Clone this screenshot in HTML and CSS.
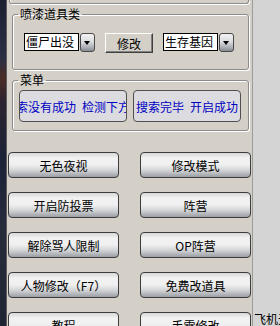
FILE: index.html
```html
<!DOCTYPE html>
<html lang="zh-CN">
<head>
    <meta charset="UTF-8">
    <meta name="viewport" content="width=device-width, initial-scale=1.0">
    <title>工具面板</title>
    <link rel="stylesheet" href="styles.css">
</head>
<body>
    <div class="window">
        <div class="edge"></div>
        <div class="panel">
            <div class="cut"></div>

            <fieldset class="group">
                <legend>喷漆道具类</legend>
                <div class="paint-row">
                    <div class="combo">
                        <div class="combo-field">僵尸出没</div>
                        <span class="combo-arrow"></span>
                    </div>
                    <button class="classic">修改</button>
                    <div class="combo">
                        <div class="combo-field">生存基因</div>
                        <span class="combo-arrow"></span>
                    </div>
                </div>
            </fieldset>

            <fieldset class="group">
                <legend>菜单</legend>
                <div class="menu-row">
                    <div class="status status-left">搜索没有成功&ensp;检测下方</div>
                    <div class="status">搜索完毕&ensp;开启成功</div>
                </div>
            </fieldset>

            <div class="actions">
                <button class="skin">无色夜视</button>
                <button class="skin">修改模式</button>
                <button class="skin">开启防投票</button>
                <button class="skin">阵营</button>
                <button class="skin">解除骂人限制</button>
                <button class="skin">OP阵营</button>
                <button class="skin">人物修改（F7）</button>
                <button class="skin">免费改道具</button>
                <button class="skin">教程</button>
                <button class="skin">手雷修改</button>
            </div>
        </div>
        <div class="side">飞机无敌</div>
    </div>
</body>
</html>
```

FILE: styles.css
```css
body {
    margin: 0;
    font-family: "Noto Sans CJK SC", "Liberation Sans", sans-serif;
    font-size: 12px;
}
.window {
    display: flex;
    width: 280px;
    height: 326px;
    overflow: hidden;
}
.edge {
    width: 6px;
    flex: none;
    background: linear-gradient(to bottom, #1b2131 0, #2a3042 18%, #4b2c24 24%, #2c2530 31%, #1c2236 48%, #262c3c 70%, #1e2433 100%);
}
.panel {
    width: 245px;
    flex: none;
    background: #d4d0c8;
    border-left: 1px solid #5c5c5c;
    border-right: 1px solid #9c9c9c;
}
.side {
    flex: 1;
    background: #d4d4d4;
    padding: 312px 0 0 1px;
    line-height: 14px;
    white-space: nowrap;
    overflow: hidden;
    color: #000;
}

/* group boxes */
.cut {
    height: 3px;
    margin: 0 3px 0 2px;
    border: 1px solid #8c8c8c;
    border-top: none;
    border-radius: 0 0 3px 3px;
    box-shadow: 1px 1px #fff, inset 1px 0 #fff;
}
.group {
    box-sizing: border-box;
    width: 237px;
    margin: 4px 0 0 5px;
    padding: 0;
    border: 1px solid #8c8c8c;
    border-radius: 3px;
    box-shadow: inset 1px 1px #fff, 1px 1px #fff;
    min-width: 0;
}
.group legend {
    margin-left: 5px;
    padding: 0 2px;
    line-height: 12px;
    color: #000;
}
.paint-row {
    display: flex;
    align-items: center;
    height: 20px;
    padding: 12px 0 17px 11px;
}
.combo {
    display: flex;
    align-items: center;
    gap: 1px;
}
.combo-field {
    box-sizing: border-box;
    width: 55px;
    height: 18px;
    padding-left: 1px;
    border: 1px solid #000;
    background: #fff;
    line-height: 16px;
    white-space: nowrap;
    overflow: hidden;
}
.combo-arrow {
    position: relative;
    box-sizing: border-box;
    width: 15px;
    height: 19px;
    border: 1px solid #4a4a4a;
    border-radius: 3px;
    background: linear-gradient(to bottom, #f2f2f2 0, #dcdde0 45%, #a9adb3 80%, #858a91 100%);
}
.combo-arrow::after {
    content: "";
    position: absolute;
    left: 3px;
    top: 7px;
    border-left: 3.5px solid transparent;
    border-right: 3.5px solid transparent;
    border-top: 4px solid #000;
}
.classic {
    box-sizing: border-box;
    width: 48px;
    height: 20px;
    margin: 2px 10px 0 10px;
    padding: 0;
    font: inherit;
    color: #000;
    background: #d4d0c8;
    border: 1px solid;
    border-color: #fff #404040 #404040 #fff;
    box-shadow: inset -1px -1px #808080;
}
.menu-row {
    display: flex;
    gap: 6px;
    padding: 4px 0 8px 6px;
}
.status {
    box-sizing: border-box;
    width: 108px;
    height: 32px;
    display: flex;
    align-items: center;
    justify-content: center;
    white-space: nowrap;
    overflow: hidden;
    border: 1px solid #505050;
    border-radius: 4px;
    background: #dcdce0;
    color: #0000c0;
}
.status-left {
    padding-right: 12px;
}

/* action buttons */
.actions {
    display: grid;
    grid-template-columns: 111px 111px;
    grid-auto-rows: 26px;
    column-gap: 21px;
    row-gap: 14px;
    margin: 21px 0 0 1px;
}
.skin {
    padding: 0;
    font: inherit;
    color: #000;
    white-space: nowrap;
    border: 1px solid #3c3c3c;
    border-radius: 4px;
    background: linear-gradient(to bottom, #d8d8d8 0, #f2f2f2 22%, #efefef 50%, #cfd1d3 74%, #9a9ea4 100%);
}
```
